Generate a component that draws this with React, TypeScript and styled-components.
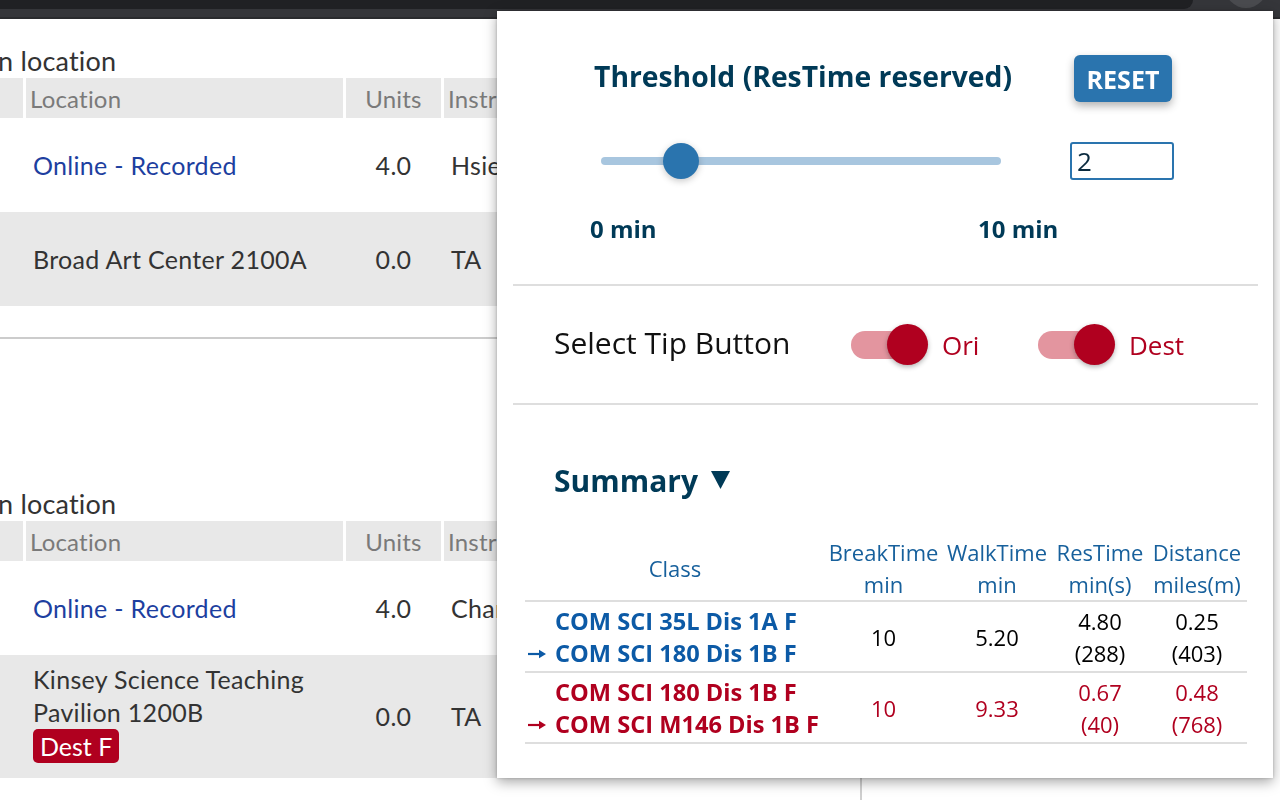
import React from "react";
import styled, { createGlobalStyle } from "styled-components";

const Colors = {
  NAVY: "#003a57",
  BLUE: "#2a74ae",
  TRACK: "#a8c6df",
  HEAD_BLUE: "#17609c",
  ROW_BLUE: "#0c5aa6",
  RED: "#b0001f",
  RED_LIGHT: "#e3959f",
  LINK: "#1d3fa0",
  GRAY_BG: "#e8e8e8",
  RULE: "#dedede",
};

const GlobalStyle = createGlobalStyle`
  html, body {
    margin: 0;
    padding: 0;
    background: #fff;
    overflow: hidden;
  }
  body {
    font-family: "Lato", "Liberation Sans", sans-serif;
  }
`;

/* ---------- browser chrome strip ---------- */

const Chrome = styled.div`
  height: 19px;
  display: flex;
  flex-direction: column;
  background: #2a2b2e;
`;

const TabStrip = styled.div`
  height: 9px;
  display: flex;
  background: #35363a;
  overflow: hidden;
`;

const TabArea = styled.div`
  flex: 1;
  background: #202124;
  border-bottom-right-radius: 9px;
`;

const ProfileSlot = styled.div`
  width: 87px;
  display: flex;
  align-items: flex-end;
  padding-left: 32px;
  box-sizing: border-box;
`;

const Avatar = styled.div`
  width: 42px;
  height: 42px;
  flex-shrink: 0;
  border-radius: 50%;
  background: #4a4b4f;
  margin-bottom: 1px;
`;

const Toolbar = styled.div`
  height: 8px;
  background: #35363a;
`;

/* ---------- page behind the popup ---------- */

const Main = styled.div`
  display: flex;
  height: 781px;
`;

const LeftPanel = styled.div`
  width: 860px;
  flex-shrink: 0;
  border-right: 2px solid #cfcfcf;
`;

const Section = styled.section<{ $top: number }>`
  padding-top: ${(p) => p.$top}px;
`;

const SectionTitle = styled.h3`
  margin: 0 0 2px -2px;
  font-weight: 400;
  font-size: 27px;
  line-height: 30px;
  letter-spacing: 0.2px;
  color: #333;
`;

const HeaderRow = styled.div`
  display: grid;
  grid-template-columns: 23px 317px 95px 1fr;
  column-gap: 3px;
  height: 40px;
`;

const HeaderCell = styled.div<{ $center?: boolean }>`
  background: ${Colors.GRAY_BG};
  display: flex;
  align-items: center;
  justify-content: ${(p) => (p.$center ? "center" : "flex-start")};
  padding-left: ${(p) => (p.$center ? 0 : 4)}px;
  font-size: 24px;
  letter-spacing: 0.2px;
  color: #7a7a7a;
  white-space: nowrap;
  overflow: hidden;
`;

const BodyRow = styled.div<{ $shade?: boolean; $height: number }>`
  display: grid;
  grid-template-columns: 23px 317px 95px 1fr;
  column-gap: 3px;
  align-items: center;
  min-height: ${(p) => p.$height}px;
  background: ${(p) => (p.$shade ? Colors.GRAY_BG : "#fff")};
  font-size: 25px;
  letter-spacing: 0.3px;
  color: #333;
`;

const BodyCell = styled.div<{ $center?: boolean }>`
  padding-left: ${(p) => (p.$center ? 0 : 7)}px;
  text-align: ${(p) => (p.$center ? "center" : "left")};
  white-space: nowrap;
  overflow: hidden;
  line-height: 33px;
`;

const LocationLink = styled.span`
  color: ${Colors.LINK};
`;

const StackedCell = styled(BodyCell)`
  padding-top: 8px;
  padding-bottom: 15px;
`;

const Badge = styled.span`
  display: inline-block;
  padding: 0 7px;
  line-height: 34px;
  border-radius: 5px;
  background: ${Colors.RED};
  color: #fff;
  font-size: 25px;
  letter-spacing: 0;
`;

const PageRule = styled.div`
  height: 2px;
  margin-top: 31px;
  background: #cccccc;
`;

/* ---------- popup ---------- */

const Popup = styled.div`
  position: fixed;
  left: 497px;
  top: 11px;
  width: 776px;
  height: 767px;
  z-index: 10;
  display: flex;
  flex-direction: column;
  background: #fff;
  box-shadow: 0 4px 12px rgba(0, 0, 0, 0.35), 0 0 3px rgba(0, 0, 0, 0.2);
  font-family: "Open Sans", "Noto Sans", sans-serif;
`;

const ThresholdSection = styled.div`
  padding: 44px 0 39px;
`;

const TitleRow = styled.div`
  display: grid;
  grid-template-columns: 480px 98px;
  align-items: center;
  height: 47px;
  padding-left: 97px;
`;

const Title = styled.h2`
  margin: 0 0 5px;
  font-size: 28.3px;
  font-weight: 700;
  line-height: 1;
  color: ${Colors.NAVY};
  white-space: nowrap;
`;

const ResetButton = styled.button`
  height: 47px;
  border: 0;
  border-radius: 6px;
  background: ${Colors.BLUE};
  color: #fff;
  font-family: inherit;
  font-size: 25px;
  font-weight: 700;
  box-shadow: 0 4px 8px rgba(0, 0, 0, 0.3);
`;

const SliderRow = styled.div`
  display: grid;
  grid-template-columns: 400px 104px;
  column-gap: 69px;
  align-items: center;
  height: 38px;
  margin-top: 40px;
  padding-left: 104px;
`;

const Track = styled.div`
  position: relative;
  height: 8px;
  border-radius: 4px;
  background: ${Colors.TRACK};
`;

const Thumb = styled.div`
  position: absolute;
  top: 50%;
  width: 36px;
  height: 36px;
  margin: -18px 0 0 -18px;
  border-radius: 50%;
  background: ${Colors.BLUE};
  box-shadow: 0 2px 7px rgba(0, 0, 0, 0.22);
`;

const ValueInput = styled.input`
  width: 104px;
  height: 38px;
  box-sizing: border-box;
  border: 2px solid ${Colors.BLUE};
  border-radius: 3px;
  padding: 0 5px;
  font-family: inherit;
  font-size: 26px;
  color: #0a2a3e;
  outline: none;
`;

const RangeLabels = styled.div`
  display: grid;
  grid-template-columns: 388px auto;
  margin-top: 33px;
  padding-left: 93px;
  font-size: 24px;
  font-weight: 700;
  line-height: 32px;
  color: ${Colors.NAVY};
`;

const Divider = styled.div`
  height: 2px;
  margin: 0 15px 0 16px;
  background: ${Colors.RULE};
`;

const TipRow = styled.div`
  display: flex;
  align-items: center;
  height: 117px;
  padding-left: 57px;
`;

const TipLabel = styled.div`
  width: 297px;
  margin-top: -4px;
  font-size: 30px;
  color: #111;
`;

const ToggleGroup = styled.div`
  width: 187px;
  display: flex;
  align-items: center;
`;

const Switch = styled.div`
  display: flex;
  align-items: center;
  width: 77px;
`;

const SwitchTrack = styled.div`
  width: 54px;
  height: 28px;
  border-radius: 14px;
  background: ${Colors.RED_LIGHT};
`;

const SwitchThumb = styled.div`
  width: 41px;
  height: 41px;
  margin-left: -18px;
  border-radius: 50%;
  background: ${Colors.RED};
  box-shadow: 0 2px 5px rgba(0, 0, 0, 0.3);
`;

const ToggleText = styled.span`
  margin-left: 14px;
  font-size: 26px;
  color: ${Colors.RED};
`;

const SummarySection = styled.div`
  padding: 55px 26px 0 28px;
`;

const SummaryTitle = styled.h2`
  display: flex;
  align-items: center;
  gap: 13px;
  height: 40px;
  margin: 0 0 36px 29px;
  font-size: 30px;
  font-weight: 700;
  color: ${Colors.NAVY};
`;

const TableRow = styled.div<{ $head?: boolean }>`
  display: grid;
  grid-template-columns: 300px 117px 110px 96px 98px;
  align-items: center;
  padding: ${(p) => (p.$head ? "0" : "3px 0 2px")};
  border-bottom: 2px solid ${Colors.RULE};
  font-size: 22px;
  line-height: 32px;
`;

const HeadCell = styled.div`
  text-align: center;
  white-space: nowrap;
  color: ${Colors.HEAD_BLUE};
`;

const ClassCell = styled.div<{ $tone: "blue" | "red" }>`
  padding-left: 3px;
  font-size: 23.6px;
  font-weight: 700;
  white-space: nowrap;
  color: ${(p) => (p.$tone === "blue" ? Colors.ROW_BLUE : Colors.RED)};
`;

const ClassLine = styled.div`
  display: flex;
  align-items: center;
`;

const ArrowSlot = styled.span`
  width: 27px;
  flex-shrink: 0;
  display: flex;
  align-items: center;
  padding-top: 1px;
`;

const NumCell = styled.div<{ $tone: "blue" | "red" }>`
  text-align: center;
  white-space: nowrap;
  color: ${(p) => (p.$tone === "blue" ? "#000" : Colors.RED)};
`;

type Row = {
  tone: "blue" | "red";
  from: string;
  to: string;
  brk: string;
  walk: string;
  res: [string, string];
  dist: [string, string];
};

const summaryRows: Row[] = [
  {
    tone: "blue",
    from: "COM SCI 35L Dis 1A F",
    to: "COM SCI 180 Dis 1B F",
    brk: "10",
    walk: "5.20",
    res: ["4.80", "(288)"],
    dist: ["0.25", "(403)"],
  },
  {
    tone: "red",
    from: "COM SCI 180 Dis 1B F",
    to: "COM SCI M146 Dis 1B F",
    brk: "10",
    walk: "9.33",
    res: ["0.67", "(40)"],
    dist: ["0.48", "(768)"],
  },
];

const CaretDown: React.FC = () => (
  <svg width="19" height="18" viewBox="0 0 19 18">
    <polygon points="0,0 19,0 9.5,18" fill={Colors.NAVY} />
  </svg>
);

const ArrowRight: React.FC = () => (
  <svg width="18" height="10" viewBox="0 0 18 10">
    <path d="M0 5 H13" stroke="currentColor" strokeWidth="2.2" />
    <polygon points="11,0.8 18,5 11,9.2" fill="currentColor" />
  </svg>
);

const Toggle: React.FC<{ label: string }> = ({ label }) => (
  <ToggleGroup>
    <Switch>
      <SwitchTrack />
      <SwitchThumb />
    </Switch>
    <ToggleText>{label}</ToggleText>
  </ToggleGroup>
);

const App: React.FC = () => {
  const threshold = 2;
  const max = 10;

  return (
    <>
      <GlobalStyle />
      <Chrome>
        <TabStrip>
          <TabArea />
          <ProfileSlot>
            <Avatar />
          </ProfileSlot>
        </TabStrip>
        <Toolbar />
      </Chrome>

      <Main>
        <LeftPanel>
          <Section $top={27}>
            <SectionTitle>n location</SectionTitle>
            <HeaderRow>
              <HeaderCell />
              <HeaderCell>Location</HeaderCell>
              <HeaderCell $center>Units</HeaderCell>
              <HeaderCell>Instructor</HeaderCell>
            </HeaderRow>
            <BodyRow $height={94}>
              <BodyCell />
              <BodyCell>
                <LocationLink>Online - Recorded</LocationLink>
              </BodyCell>
              <BodyCell $center>4.0</BodyCell>
              <BodyCell>Hsieh, M.</BodyCell>
            </BodyRow>
            <BodyRow $height={94} $shade>
              <BodyCell />
              <BodyCell>Broad Art Center 2100A</BodyCell>
              <BodyCell $center>0.0</BodyCell>
              <BodyCell>TA</BodyCell>
            </BodyRow>
          </Section>

          <PageRule />

          <Section $top={150}>
            <SectionTitle>n location</SectionTitle>
            <HeaderRow>
              <HeaderCell />
              <HeaderCell>Location</HeaderCell>
              <HeaderCell $center>Units</HeaderCell>
              <HeaderCell>Instructor</HeaderCell>
            </HeaderRow>
            <BodyRow $height={94}>
              <BodyCell />
              <BodyCell>
                <LocationLink>Online - Recorded</LocationLink>
              </BodyCell>
              <BodyCell $center>4.0</BodyCell>
              <BodyCell>Chang, A.</BodyCell>
            </BodyRow>
            <BodyRow $height={122} $shade>
              <BodyCell />
              <StackedCell>
                Kinsey Science Teaching
                <br />
                Pavilion 1200B
                <br />
                <Badge>Dest F</Badge>
              </StackedCell>
              <BodyCell $center>0.0</BodyCell>
              <BodyCell>TA</BodyCell>
            </BodyRow>
          </Section>
        </LeftPanel>
      </Main>

      <Popup>
        <ThresholdSection>
          <TitleRow>
            <Title>Threshold (ResTime reserved)</Title>
            <ResetButton>RESET</ResetButton>
          </TitleRow>
          <SliderRow>
            <Track>
              <Thumb style={{ left: `${(threshold / max) * 100}%` }} />
            </Track>
            <ValueInput defaultValue={String(threshold)} />
          </SliderRow>
          <RangeLabels>
            <span>0 min</span>
            <span>{max} min</span>
          </RangeLabels>
        </ThresholdSection>

        <Divider />

        <TipRow>
          <TipLabel>Select Tip Button</TipLabel>
          <Toggle label="Ori" />
          <Toggle label="Dest" />
        </TipRow>

        <Divider />

        <SummarySection>
          <SummaryTitle>
            Summary
            <CaretDown />
          </SummaryTitle>

          <TableRow $head>
            <HeadCell>Class</HeadCell>
            <HeadCell>
              BreakTime
              <br />
              min
            </HeadCell>
            <HeadCell>
              WalkTime
              <br />
              min
            </HeadCell>
            <HeadCell>
              ResTime
              <br />
              min(s)
            </HeadCell>
            <HeadCell>
              Distance
              <br />
              miles(m)
            </HeadCell>
          </TableRow>

          {summaryRows.map((r, i) => (
            <TableRow key={i}>
              <ClassCell $tone={r.tone}>
                <ClassLine>
                  <ArrowSlot />
                  {r.from}
                </ClassLine>
                <ClassLine>
                  <ArrowSlot>
                    <ArrowRight />
                  </ArrowSlot>
                  {r.to}
                </ClassLine>
              </ClassCell>
              <NumCell $tone={r.tone}>{r.brk}</NumCell>
              <NumCell $tone={r.tone}>{r.walk}</NumCell>
              <NumCell $tone={r.tone}>
                {r.res[0]}
                <br />
                {r.res[1]}
              </NumCell>
              <NumCell $tone={r.tone}>
                {r.dist[0]}
                <br />
                {r.dist[1]}
              </NumCell>
            </TableRow>
          ))}
        </SummarySection>
      </Popup>
    </>
  );
};

export default App;
